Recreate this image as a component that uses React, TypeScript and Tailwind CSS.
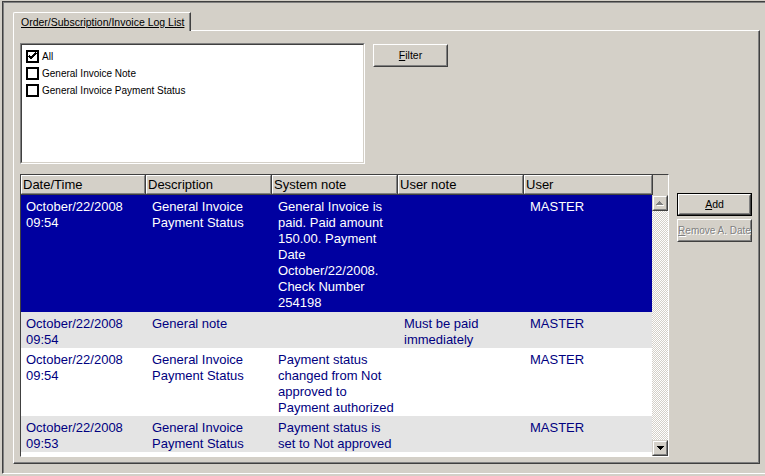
import React from 'react'

type LogRow = {
  cells: string[][]
  className: string
}

const rows: LogRow[] = [
  {
    cells: [
      ['October/22/2008', '09:54'],
      ['General Invoice', 'Payment Status'],
      ['General Invoice is', 'paid. Paid amount', '150.00. Payment', 'Date', 'October/22/2008.', 'Check Number', '254198'],
      [],
      ['MASTER'],
    ],
    className: 'h-[117px] bg-[#0000a0] text-white',
  },
  {
    cells: [
      ['October/22/2008', '09:54'],
      ['General note'],
      [],
      ['Must be paid', 'immediately'],
      ['MASTER'],
    ],
    className: 'h-[36px] bg-[#e4e4e4] text-[#000080]',
  },
  {
    cells: [
      ['October/22/2008', '09:54'],
      ['General Invoice', 'Payment Status'],
      ['Payment status', 'changed from Not', 'approved to', 'Payment authorized'],
      [],
      ['MASTER'],
    ],
    className: 'h-[68px] bg-white text-[#000080]',
  },
  {
    cells: [
      ['October/22/2008', '09:53'],
      ['General Invoice', 'Payment Status'],
      ['Payment status is', 'set to Not approved'],
      [],
      ['MASTER'],
    ],
    className: 'h-[36px] bg-[#e4e4e4] text-[#000080]',
  },
]

// body column widths, header last column is 1px wider
const colWidths = ['w-[125px]', 'w-[126px]', 'w-[126px]', 'w-[126px]', 'w-[128px]']

const headers = [
  { label: 'Date/Time', w: 'w-[125px]' },
  { label: 'Description', w: 'w-[126px]' },
  { label: 'System note', w: 'w-[126px]' },
  { label: 'User note', w: 'w-[126px]' },
  { label: 'User', w: 'w-[129px]' },
]

const filters = [
  { label: 'All', checked: true },
  { label: 'General Invoice Note', checked: false },
  { label: 'General Invoice Payment Status', checked: false },
]

function Checkbox({ checked }: { checked: boolean }) {
  return (
    <div className="flex h-[13px] w-[13px] shrink-0 items-center justify-center border-2 border-black bg-white">
      {checked && (
        <svg width="9" height="9" viewBox="0 0 9 9" shapeRendering="crispEdges">
          <path d="M1 4 L3 6 L8 1" stroke="#000" strokeWidth="2" fill="none" />
        </svg>
      )}
    </div>
  )
}

// classic raised 3D button
function Bevel({ children, className = '' }: { children: React.ReactNode; className?: string }) {
  return (
    <div className={`border-t border-l border-t-white border-l-white border-r border-b border-r-[#404040] border-b-[#404040] ${className}`}>
      <div className="flex h-full w-full items-center justify-center border-t border-l border-t-[#d4d0c8] border-l-[#d4d0c8] border-r border-b border-r-[#808080] border-b-[#808080]">
        {children}
      </div>
    </div>
  )
}

function ScrollButton({ down }: { down?: boolean }) {
  return (
    <div className="h-[16px] w-[16px] border-t border-l border-t-[#d4d0c8] border-l-[#d4d0c8] border-r border-b border-r-[#404040] border-b-[#404040] bg-[#d4d0c8]">
      <div className="flex h-full w-full items-center justify-center border-t border-l border-t-white border-l-white border-r border-b border-r-[#808080] border-b-[#808080]">
        {down ? (
          <svg width="7" height="4" viewBox="0 0 7 4" shapeRendering="crispEdges">
            <polygon points="0,0 7,0 3.5,4" fill="#000" />
          </svg>
        ) : (
          <svg width="8" height="5" viewBox="0 0 8 5" shapeRendering="crispEdges">
            <polygon points="4.5,1 8,5 1,5" fill="#fff" />
            <polygon points="3.5,0 7,4 0,4" fill="#808080" />
          </svg>
        )}
      </div>
    </div>
  )
}

export default function App() {
  return (
    <div className="h-[476px] w-[765px] overflow-hidden bg-[#d4d0c8] pt-[1px] pl-[2px] font-['Liberation_Sans',Arial,sans-serif] text-black">
      {/* 外枠 */}
      <div className="h-[473px] border-t border-l border-t-[#404040] border-l-[#404040] border-b border-b-white">
        <div className="h-full border-t border-l border-t-[#808080] border-l-[#808080]">
          {/* タブ */}
          <div className="pt-[9px] pl-[9px]">
            <div className="relative z-10 flex h-[19px] w-[178px] rounded-tl-[2px] border-t border-l border-t-white border-l-white border-r border-r-[#404040] bg-[#d4d0c8]">
              <div className="flex h-full w-full items-start border-r border-r-[#808080] pt-[3px] pl-[7px]">
                <span className="text-[10.5px] leading-[13px] underline underline-offset-[1px]">
                  Order/Subscription/Invoice Log List
                </span>
              </div>
            </div>
          </div>

          {/* パネル */}
          <div className="-mt-[1px] ml-[9px] h-[434px] w-[747px] border-t border-l border-t-white border-l-white border-r border-b border-r-[#404040] border-b-[#404040]">
            <div className="h-full w-full border-r border-b border-r-[#808080] border-b-[#808080] pt-[12px] pl-[6px]">
              {/* フィルター */}
              <div className="flex items-start gap-[8px]">
                <div className="h-[121px] w-[345px] border-t border-l border-t-[#808080] border-l-[#808080] border-r border-b border-r-white border-b-white">
                  <div className="h-full w-full border-t border-l border-t-[#404040] border-l-[#404040] border-r border-b border-r-[#d4d0c8] border-b-[#d4d0c8] bg-white pt-[5px] pl-[4px]">
                    {filters.map((f) => (
                      <div key={f.label} className="flex h-[17px] items-start gap-[3px]">
                        <Checkbox checked={f.checked} />
                        <span className="text-[10px] leading-[13px]">{f.label}</span>
                      </div>
                    ))}
                  </div>
                </div>
                <Bevel className="mt-[1px] h-[23px] w-[75px]">
                  <span className="text-[10.5px]">
                    <span className="underline">F</span>ilter
                  </span>
                </Bevel>
              </div>

              {/* ログ一覧 */}
              <div className="mt-[10px] flex items-start gap-[8px]">
                <div className="flex h-[283px] w-[649px] flex-col border-t border-l border-t-[#404040] border-l-[#404040] border-r border-b border-r-white border-b-white">
                  <div className="flex h-[20px] shrink-0">
                    {headers.map((h) => (
                      <div key={h.label} className={`${h.w} h-full border-r border-b border-r-[#404040] border-b-[#404040]`}>
                        <div className="flex h-full items-center border-t border-l border-t-white border-l-white border-r border-b border-r-[#808080] border-b-[#808080] pl-[1px] text-[13px] leading-none">
                          {h.label}
                        </div>
                      </div>
                    ))}
                  </div>
                  <div className="flex min-h-0 flex-1">
                    <div className="w-[631px] overflow-hidden bg-white">
                      {rows.map((r, i) => (
                        <div key={i} className={`flex ${r.className}`}>
                          {r.cells.map((lines, c) => (
                            <div
                              key={c}
                              className={`${colWidths[c]} ${c === 0 ? 'pl-[5px]' : 'pl-[6px]'} pt-[4px] text-[13px] leading-[16px] whitespace-nowrap`}
                            >
                              {lines.map((l) => (
                                <div key={l}>{l}</div>
                              ))}
                            </div>
                          ))}
                        </div>
                      ))}
                    </div>
                    <div className="flex w-[16px] flex-col">
                      <ScrollButton />
                      <div className="flex-1 bg-[image:repeating-conic-gradient(#ffffff_0%_25%,#d4d0c8_0%_50%)] bg-[length:2px_2px]" />
                      <ScrollButton down />
                    </div>
                  </div>
                </div>

                <div className="flex flex-col gap-[3px] pt-[19px]">
                  <div className="h-[23px] w-[75px] border border-black">
                    <Bevel className="h-full w-full">
                      <span className="text-[10.5px]">
                        <span className="underline">A</span>dd
                      </span>
                    </Bevel>
                  </div>
                  <Bevel className="h-[23px] w-[75px] overflow-hidden">
                    <span className="text-[10px] whitespace-nowrap text-[#808080] [text-shadow:1px_1px_0_#ffffff]">
                      <span className="underline">R</span>emove A. Date
                    </span>
                  </Bevel>
                </div>
              </div>
            </div>
          </div>
        </div>
      </div>
    </div>
  )
}
